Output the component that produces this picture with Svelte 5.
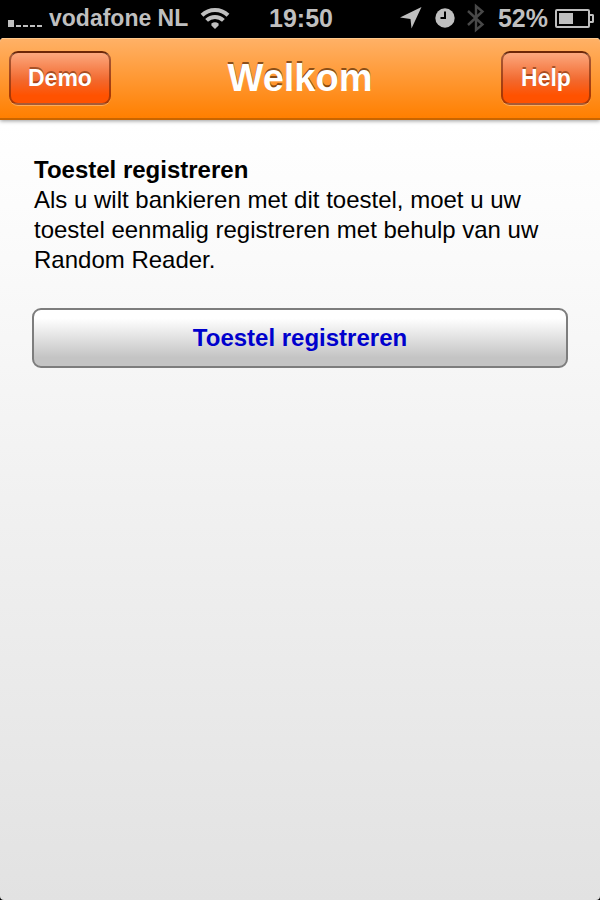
<script lang="ts">
	let carrier = 'vodafone NL';
	let time = '19:50';
	let battery = 52;
	let signal = 1;
</script>

<div class="screen">
	<div class="status">
		<div class="left">
			<div class="signal">
				{#each [1, 2, 3, 4, 5] as bar}
					<i class:on={bar <= signal}></i>
				{/each}
			</div>
			<span class="carrier">{carrier}</span>
			<svg class="wifi" width="30" height="22" viewBox="0 0 30 22" aria-hidden="true">
				<path d="M2 8.2a18.6 18.6 0 0 1 26 0" />
				<path d="M6.6 13.4a12.2 12.2 0 0 1 16.8 0" />
				<path class="dot" d="M15 22l-3.6-3.4v-2q3.6-2.6 7.2 0v2z" />
			</svg>
		</div>

		<span class="time">{time}</span>

		<div class="right">
			<svg class="arrow" width="22" height="22" viewBox="0 0 22 22" aria-hidden="true">
				<path d="M21.5 0L11.5 21.5L10.5 12L0 10.5z" />
			</svg>
			<svg class="clock" width="20" height="20" viewBox="0 0 20 20" aria-hidden="true">
				<circle cx="10" cy="10" r="9.7" />
				<path d="M10 3.5V10H5.5" />
			</svg>
			<svg class="bluetooth" width="18" height="30" viewBox="0 0 18 30" aria-hidden="true">
				<path d="M1 8l14.5 13.5L9 27V3l6.5 5.5L1 22" />
			</svg>
			<span>{battery}%</span>
			<div class="battery">
				<div class="cell">
					<div class="level" style="width: {battery}%"></div>
				</div>
				<div class="cap"></div>
			</div>
		</div>
	</div>

	<main class="app">
		<header>
			<button class="nav">Demo</button>
			<h1>Welkom</h1>
			<button class="nav help">Help</button>
		</header>

		<section>
			<h2>Toestel registreren</h2>
			<p>
				Als u wilt bankieren met dit toestel, moet u uw toestel eenmalig registreren met behulp van
				uw Random Reader.
			</p>
			<button class="register">Toestel registreren</button>
		</section>
	</main>
</div>

<style>
	:global(body) {
		margin: 0;
		background: #000;
	}

	.screen {
		display: flex;
		flex-direction: column;
		min-height: 100vh;
		background: #000;
		font-family: 'Liberation Sans', Arial, Helvetica, sans-serif;
	}

	/* status bar */
	.status {
		display: grid;
		grid-template-columns: 1fr auto 1fr;
		align-items: center;
		height: 38px;
		padding: 0 6px 2px 8px;
		box-sizing: border-box;
		color: #bfbfbf;
		font-size: 25px;
		font-weight: bold;
		line-height: 36px;
		white-space: nowrap;
	}
	.left,
	.right {
		display: flex;
		align-items: center;
	}
	.right {
		justify-content: flex-end;
	}
	.carrier {
		font-size: 23px;
	}
	.signal {
		display: flex;
		align-items: flex-end;
		gap: 2px;
		height: 18px;
		margin-right: 7px;
	}
	.signal i {
		width: 5px;
		height: 2px;
		background: #bfbfbf;
	}
	.signal i.on {
		width: 6px;
		height: 7px;
	}
	.wifi {
		margin-left: 12px;
		fill: none;
		stroke: #bfbfbf;
		stroke-width: 4;
	}
	.wifi .dot {
		fill: #bfbfbf;
		stroke: none;
	}
	.arrow {
		margin-right: 13px;
		fill: #bfbfbf;
	}
	.clock {
		margin-right: 12px;
		fill: #bfbfbf;
	}
	.clock path {
		fill: none;
		stroke: #000;
		stroke-width: 2;
	}
	.bluetooth {
		margin-right: 13px;
		fill: none;
		stroke: #484848;
		stroke-width: 2.4;
	}
	.battery {
		display: flex;
		align-items: center;
		margin-left: 7px;
	}
	.cell {
		width: 35px;
		height: 19px;
		padding: 2px;
		border: 2px solid #bfbfbf;
		border-radius: 2px;
		box-sizing: border-box;
	}
	.level {
		height: 11px;
		background: #bfbfbf;
	}
	.cap {
		width: 4px;
		height: 9px;
		border: 2px solid #bfbfbf;
		border-left: 0;
		border-radius: 0 2px 2px 0;
		box-sizing: border-box;
	}

	/* app */
	.app {
		flex: 1;
		border-radius: 4px;
		overflow: hidden;
		background: linear-gradient(#fff 10%, #e2e2e2);
	}
	header {
		display: grid;
		grid-template-columns: 1fr auto 1fr;
		align-items: center;
		height: 82px;
		padding: 0 9px 2px;
		box-sizing: border-box;
		border-top: 1px solid #ffc98c;
		border-bottom: 2px solid #c96500;
		background: linear-gradient(#ffb166, #ff7f00);
		box-shadow: 0 1px 4px rgba(0, 0, 0, 0.4);
	}
	h1 {
		margin: 0;
		color: #fff;
		font-size: 38px;
		line-height: 48px;
		text-shadow: 0 -2px 0 rgba(70, 30, 0, 0.65);
	}
	.nav {
		justify-self: start;
		min-width: 90px;
		height: 54px;
		padding: 2px 17px 0;
		border: 2px solid rgba(110, 40, 10, 0.6);
		border-top-color: rgba(60, 25, 10, 0.75);
		border-radius: 9px;
		background: linear-gradient(#fca87e, #f2682d 55%, #ff5200 85%);
		box-shadow: 0 1px 0 rgba(255, 190, 120, 0.7);
		color: #fff;
		font-family: inherit;
		font-size: 23px;
		font-weight: bold;
		text-shadow: 0 -2px 0 rgba(90, 30, 0, 0.5);
	}
	.help {
		justify-self: end;
	}
	section {
		padding: 35px 32px;
		color: #000;
		font-size: 24px;
		line-height: 30px;
	}
	h2,
	p {
		margin: 0 2px;
		font-size: inherit;
	}
	.register {
		display: block;
		width: 100%;
		height: 60px;
		margin-top: 33px;
		border: 2px solid #7d7d7d;
		border-radius: 9px;
		background: linear-gradient(#fff 15%, #c4c4c4 85%);
		color: #0000cd;
		font-family: inherit;
		font-size: 24px;
		font-weight: bold;
	}
</style>
